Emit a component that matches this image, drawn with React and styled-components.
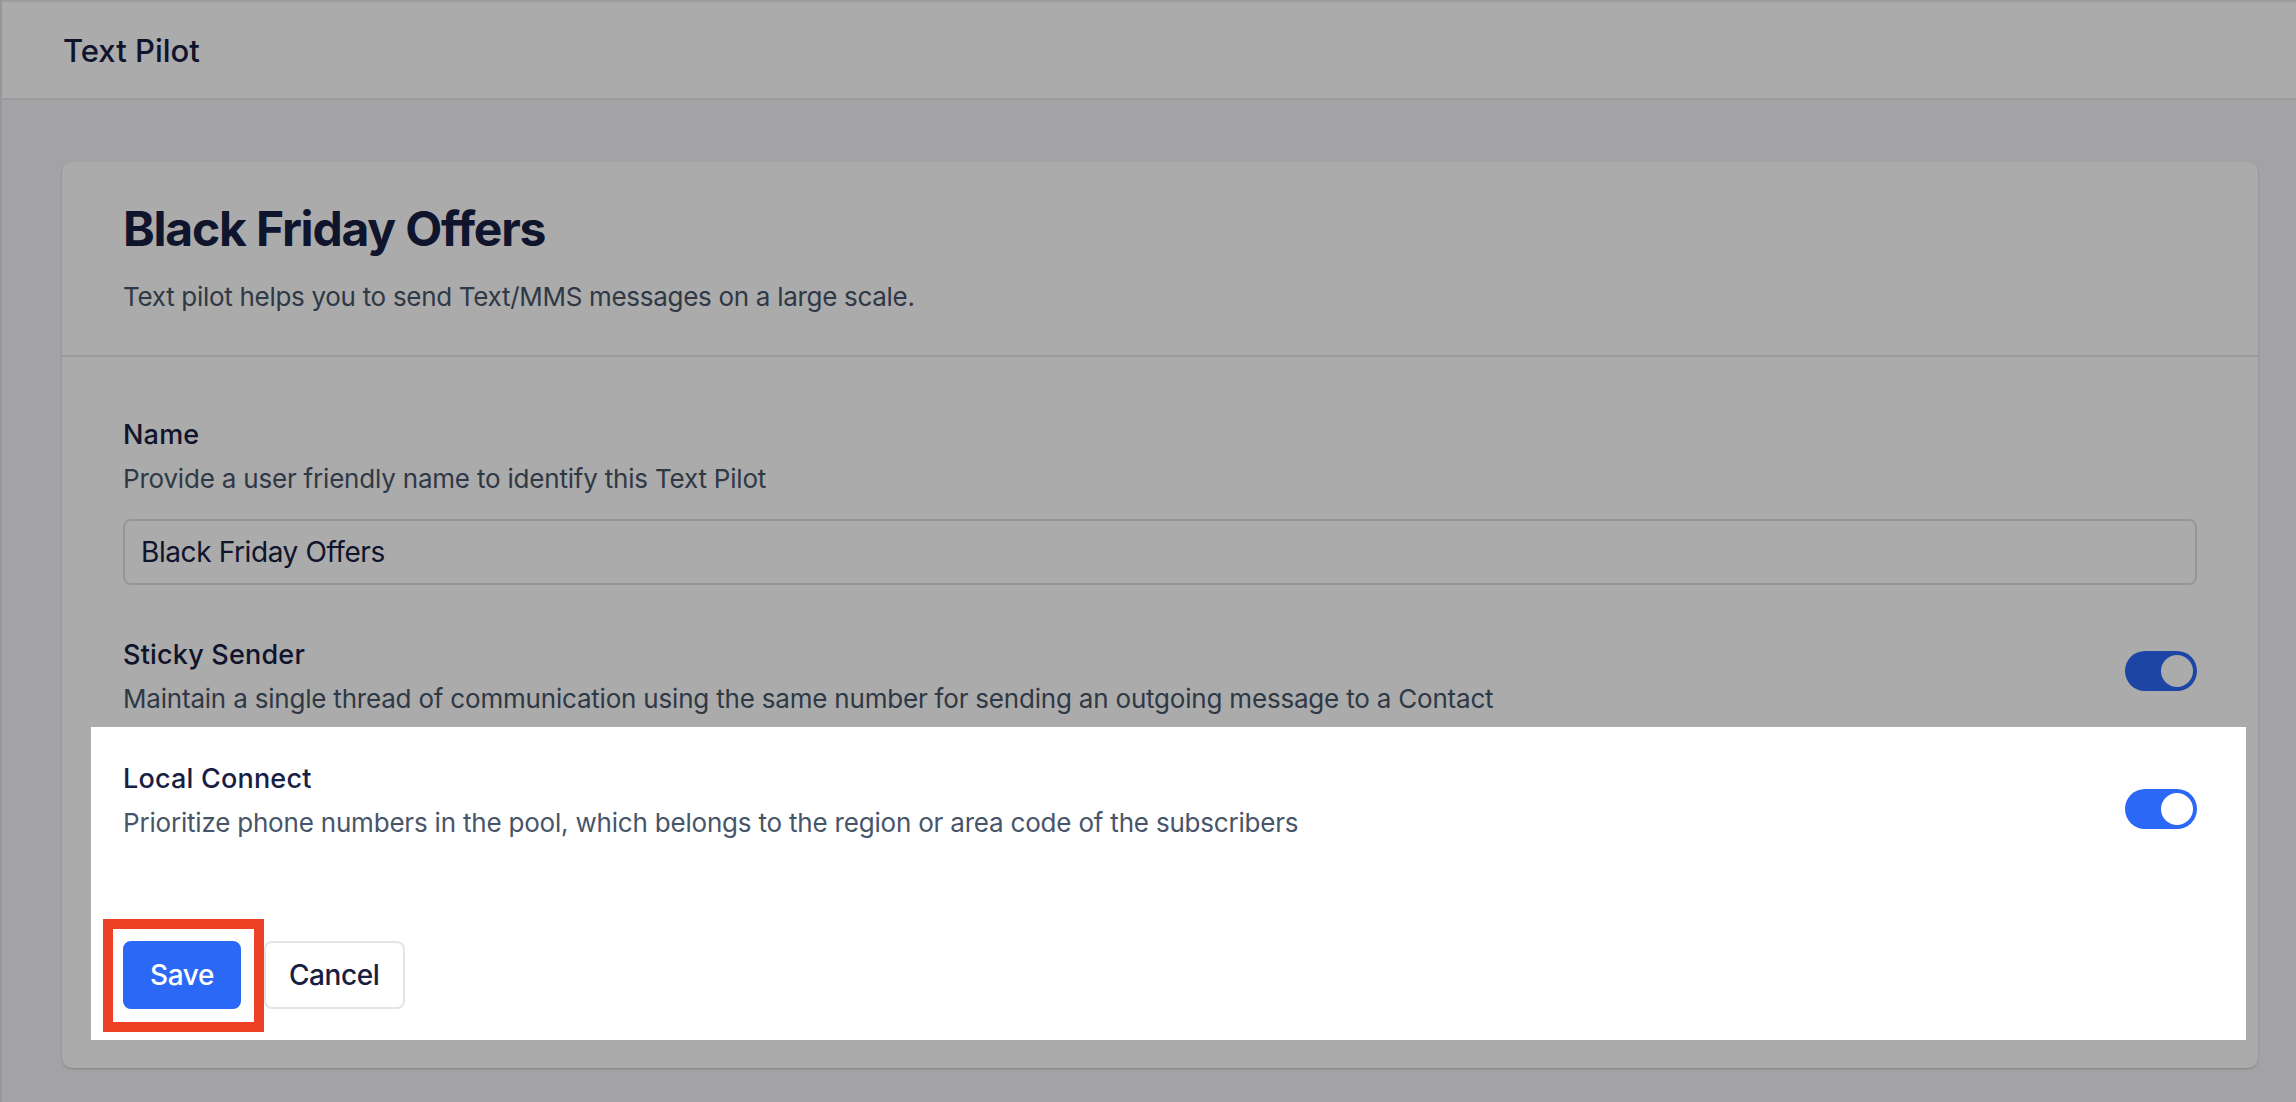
import React from 'react';
import styled, { createGlobalStyle } from 'styled-components';

const GlobalStyle = createGlobalStyle`
  * { box-sizing: border-box; }
  html, body { margin: 0; padding: 0; }
  body {
    font-family: Inter, "Noto Sans", "Liberation Sans", sans-serif;
    background: #f3f4f6;
    color: #172042;
    overflow: hidden;
  }
`;

const Page = styled.div`
  min-height: 100vh;
  border-left: 2px solid #dfe1e6;
  background: #f3f4f6;
`;

const TopBar = styled.header`
  height: 100px;
  display: flex;
  align-items: center;
  padding-left: 61px;
  background: #ffffff;
  border-top: 2px solid #e9eaee;
  border-bottom: 2px solid #e5e7eb;
`;

const AppName = styled.div`
  font-size: 31px;
  font-weight: 500;
  color: #172042;
`;

const Main = styled.main`
  padding: 62px 38px 0 60px;
`;

const Card = styled.section`
  background: #ffffff;
  border-radius: 10px;
  box-shadow: 0 1px 3px rgba(0, 0, 0, 0.12), 0 1px 2px rgba(0, 0, 0, 0.08);
  padding-bottom: 28px;
`;

const CardHead = styled.div`
  padding: 38px 61px 42px;
  border-bottom: 2px solid #e5e7eb;
`;

const Title = styled.h1`
  margin: 0;
  font-size: 48px;
  line-height: 58px;
  font-weight: 700;
  color: #172042;
  letter-spacing: -1.2px;
`;

const Subtitle = styled.p`
  margin: 23px 0 0;
  font-size: 26px;
  line-height: 32px;
  color: #475569;
  letter-spacing: -0.3px;
`;

const CardBody = styled.div`
  padding: 62px 61px 0;
`;

const Label = styled.div`
  font-size: 27px;
  line-height: 32px;
  font-weight: 500;
  color: #172042;
  letter-spacing: 0.2px;
`;

const Hint = styled.div`
  margin-top: 12px;
  font-size: 26px;
  line-height: 32px;
  color: #475569;
  letter-spacing: -0.2px;
`;

const TextInput = styled.input`
  display: block;
  width: 100%;
  height: 66px;
  margin-top: 24px;
  padding: 0 16px;
  border: 2px solid #dcdfe5;
  border-radius: 8px;
  font-family: inherit;
  font-size: 28px;
  letter-spacing: -0.4px;
  color: #172042;
  background: #ffffff;
  outline: none;
`;

const SettingRow = styled.div`
  display: flex;
  justify-content: space-between;
  align-items: flex-start;
  margin-top: ${(p) => p.$gap || 0}px;
`;

const SettingText = styled.div`
  display: flex;
  flex-direction: column;
`;

const Track = styled.button`
  flex: none;
  width: 72px;
  height: 40px;
  margin-top: ${(p) => p.$top}px;
  padding: 4px;
  border: none;
  border-radius: 20px;
  background: #2b68f6;
  display: flex;
  justify-content: flex-end;
  cursor: pointer;
`;

const Knob = styled.span`
  width: 32px;
  height: 32px;
  border-radius: 50%;
  background: #ffffff;
`;

const Spotlight = styled.div`
  position: relative;
  z-index: 20;
  margin: 12px -49px 0 -32px;
  padding: 36px 49px 31px 32px;
  background: #ffffff;
`;

const Actions = styled.div`
  display: flex;
  align-items: center;
  gap: 23px;
  margin-top: 102px;
`;

const SaveWrap = styled.div`
  position: relative;
  display: flex;
`;

const Button = styled.button`
  height: 68px;
  padding: 0 ${(p) => (p.$primary ? 25 : 23)}px;
  border-radius: 8px;
  border: 2px solid ${(p) => (p.$primary ? '#2b68f6' : '#e3e4e9')};
  background: ${(p) => (p.$primary ? '#2b68f6' : '#ffffff')};
  color: ${(p) => (p.$primary ? '#ffffff' : '#172042')};
  font-family: inherit;
  font-size: 28px;
  font-weight: 500;
  letter-spacing: -0.4px;
  cursor: pointer;
`;

const Marker = styled.div`
  position: absolute;
  left: -20px;
  top: -22px;
  right: -23px;
  bottom: -23px;
  border: 10px solid #ee4125;
  pointer-events: none;
`;

const Dim = styled.div`
  position: fixed;
  inset: 0;
  z-index: 10;
  background: rgba(0, 0, 0, 0.33);
`;

function Toggle({ top }) {
  return (
    <Track $top={top} aria-pressed="true">
      <Knob />
    </Track>
  );
}

export default function App() {
  return (
    <>
      <GlobalStyle />
      <Page>
        <TopBar>
          <AppName>Text Pilot</AppName>
        </TopBar>
        <Main>
          <Card>
            <CardHead>
              <Title>Black Friday Offers</Title>
              <Subtitle>Text pilot helps you to send Text/MMS messages on a large scale.</Subtitle>
            </CardHead>
            <CardBody>
              <Label>Name</Label>
              <Hint>Provide a user friendly name to identify this Text Pilot</Hint>
              <TextInput defaultValue="Black Friday Offers" />

              <SettingRow $gap={54}>
                <SettingText>
                  <Label>Sticky Sender</Label>
                  <Hint>
                    Maintain a single thread of communication using the same number for sending an outgoing message to a Contact
                  </Hint>
                </SettingText>
                <Toggle top={12} />
              </SettingRow>

              <Spotlight>
                <SettingRow>
                  <SettingText>
                    <Label>Local Connect</Label>
                    <Hint>
                      Prioritize phone numbers in the pool, which belongs to the region or area code of the subscribers
                    </Hint>
                  </SettingText>
                  <Toggle top={26} />
                </SettingRow>
                <Actions>
                  <SaveWrap>
                    <Button $primary>Save</Button>
                    <Marker />
                  </SaveWrap>
                  <Button>Cancel</Button>
                </Actions>
              </Spotlight>
            </CardBody>
          </Card>
        </Main>
        <Dim />
      </Page>
    </>
  );
}
